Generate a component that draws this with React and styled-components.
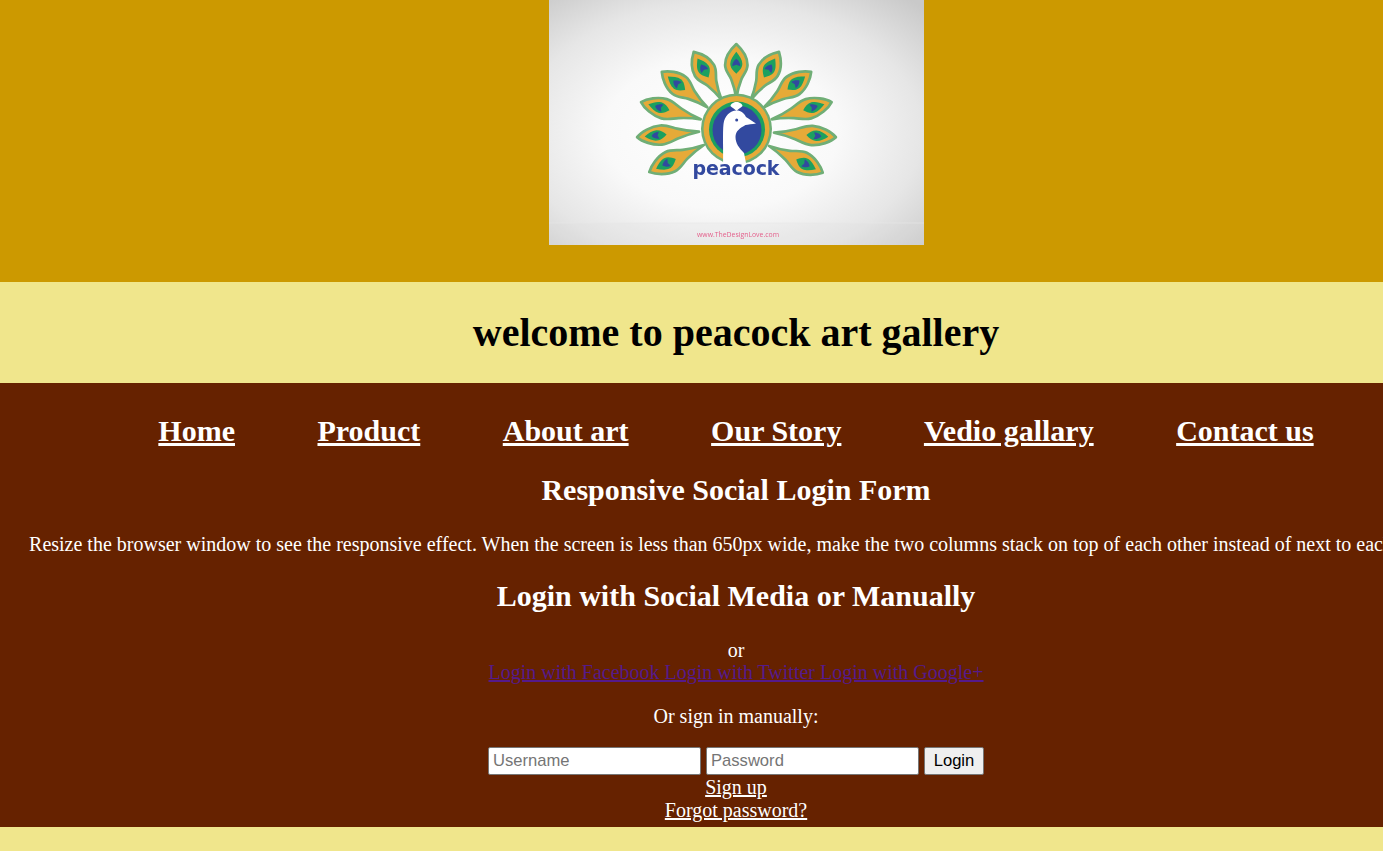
import React from "react";
import styled, { createGlobalStyle } from "styled-components";

const Global = createGlobalStyle`
  html, body { margin: 0; padding: 0; height: 100%; overflow: hidden; background: #f0e68c; }
  body { font-family: "Liberation Serif", "Times New Roman", serif; font-size: 20px; color: #fff; }
`;
const Page = styled.div`
  width: 1472px;
  min-height: 851px;
  text-align: center;
`;
const Masthead = styled.header`
  height: 282px;
  background: #cc9900;
  display: flex;
  justify-content: center;
  align-items: flex-start;
`;
const Logo = styled.svg`
  display: block;
  width: 375px;
  height: 245px;
`;
const TitleBand = styled.div`
  height: 101px;
  background: #f0e68c;
  display: flex;
  align-items: center;
  justify-content: center;
`;
const Title = styled.h1`
  margin: 0;
  font-size: 40px;
  font-weight: bold;
  color: #000;
`;
const Main = styled.main`
  height: 444px;
  background: #662200;
  padding-top: 30px;
  box-sizing: border-box;
`;
const Nav = styled.nav`
  display: flex;
  justify-content: center;
  gap: 82.5px;
  line-height: 35px;
`;
const NavLink = styled.a`
  font-size: 30px;
  font-weight: bold;
  color: #fff;
  text-decoration: underline;
`;
const Heading = styled.h2`
  margin: ${(p) => p.$top}px 0 0;
  font-size: 30px;
  line-height: 34px;
  font-weight: bold;
`;
const Lead = styled.p`
  margin: 26px 0 0;
  line-height: 23px;
  white-space: nowrap;
  display: flex;
  justify-content: center;
`;
const Line = styled.div`
  line-height: ${(p) => p.$height || 23}px;
  margin-top: ${(p) => p.$top || 0}px;
`;
const SocialLink = styled.a`
  color: #551a8b;
  text-decoration: underline;
`;
const FormRow = styled.form`
  display: flex;
  justify-content: center;
  gap: 5px;
  margin-top: 19px;
`;
const Field = styled.input`
  box-sizing: border-box;
  width: 213px;
  height: 28px;
  padding: 1px 4px;
  border: 1px solid #767676;
  border-radius: 2px;
  background: #fff;
  font: 16.6px "Liberation Sans", Arial, sans-serif;
  &::placeholder { color: #757575; opacity: 1; }
`;
const Submit = styled.button`
  box-sizing: border-box;
  width: 60px;
  height: 28px;
  padding: 0;
  border: 1px solid #767676;
  border-radius: 2px;
  background: #efefef;
  color: #000;
  font: 16.6px "Liberation Sans", Arial, sans-serif;
`;
const PlainLink = styled.a`
  color: #fff;
  text-decoration: underline;
`;

/* [baseX, baseY, tipX, tipY, halfWidth] in the logo's own pixels */
const feathers = [
  [187.3, 98.3, 187.3, 42.7, 11.2],
  [172.7, 100, 144, 50.7, 11],
  [201.7, 100, 230.7, 50.7, 11],
  [158.3, 107.3, 111.7, 71, 10.8],
  [215, 107.3, 263.3, 71, 10.8],
  [151.7, 119.3, 90.7, 101.7, 10],
  [222.7, 119.3, 284, 101.7, 10],
  [150, 131.7, 86.7, 137.3, 9.6],
  [225, 132.7, 288.3, 137.3, 9.6],
  [155, 145, 99, 172.7, 10.8],
  [220, 146, 275, 173.3, 10.8],
];

const Feather = ({ data }) => {
  const [bx, by, tx, ty, w] = data;
  const dx = tx - bx;
  const dy = ty - by;
  const L = Math.hypot(dx, dy);
  const a = (Math.atan2(dx, -dy) * 180) / Math.PI;
  const wY = -L * 0.6;
  const g = w * 0.54;
  const b = w * 0.36;
  return (
    <g transform={`translate(${bx} ${by}) rotate(${a})`}>
      <path
        d={`M0 0 C0.800 ${-L * 0.1} 2 ${-L * 0.2} 5 ${-L * 0.34} C7 ${-L * 0.43} ${w} ${wY + 6} ${w} ${wY} C${w} ${wY - 9} 5 ${-L + 6} 0 ${-L + 1.400} C-5 ${-L + 6} ${-w} ${wY - 9} ${-w} ${wY} C${-w} ${wY + 6} -7 ${-L * 0.43} -5 ${-L * 0.34} C-2 ${-L * 0.2} -0.800 ${-L * 0.1} 0 0 Z`}
        fill="#e6aa38"
        stroke="#6fae76"
        strokeWidth="2.7"
        strokeLinejoin="round"
      />
      <path
        d={`M0 ${-L + 9} C3 ${-L + 13} ${g} ${-L + 17} ${g} ${-L + 21} C${g} ${-L + 25} 3 ${-L + 28} 0 ${-L + 31} C-3 ${-L + 28} ${-g} ${-L + 25} ${-g} ${-L + 21} C${-g} ${-L + 17} -3 ${-L + 13} 0 ${-L + 9} Z`}
        fill="#1ba061"
      />
      <path
        d={`M0 ${-L + 16} C2 ${-L + 17.500} ${b} ${-L + 20} ${b} ${-L + 23.500} L0 ${-L + 22} L${-b} ${-L + 23.500} C${-b} ${-L + 20} -2 ${-L + 17.500} 0 ${-L + 16} Z`}
        fill="#33489f"
      />
    </g>
  );
};

const LogoArt = () => (
  <Logo viewBox="0 0 375 245" role="img" aria-label="Peacock logo">
    <defs>
      <radialGradient id="bg" cx="46%" cy="54%" r="74%">
        <stop offset="0" stopColor="#ffffff" />
        <stop offset="0.42" stopColor="#f9f9f9" />
        <stop offset="0.72" stopColor="#e6e6e6" />
        <stop offset="1" stopColor="#c9c9c9" />
      </radialGradient>
      <filter id="soft" x="-5%" y="-5%" width="110%" height="110%">
        <feGaussianBlur stdDeviation="0.65" />
      </filter>
    </defs>
    <rect width="375" height="245" fill="url(#bg)" />
    <rect y="223" width="375" height="22" fill="#d9d9d9" opacity="0.15" />
    <rect y="222.500" width="375" height="1" fill="#e9e9e9" opacity="0.6" />
    <g filter="url(#soft)">
      {feathers.map((f) => <Feather key={f.join()} data={f} />)}
      <circle cx="187.5" cy="129" r="35.5" fill="#6fae76" />
      <circle cx="187.5" cy="129" r="33" fill="#e6aa38" />
      <circle cx="188" cy="129.500" r="28" fill="#1ba061" />
      <circle cx="188" cy="130" r="24.5" fill="#33489f" />
      <path
        d="M174 168 C174.500 150 173.500 132 174.500 124 C175.500 116 181 110.500 187.500 110.500 C192 110.500 195 113 197 117 C200 119 204 121.500 207 123.500 C203 124.300 199 124.500 196.500 125 C191 128 186.500 131 186.500 137 C186.500 143 190 148 195 153 L198 168 Z"
        fill="#fff"
      />
      <path d="M187.500 102 C190 102 193.500 104 193.500 106 C192 108 189.500 108.500 187.500 111 C185.500 108.500 183 108 181.500 106 C181.500 104 185 102 187.500 102 Z" fill="#fff" />
      <circle cx="187.7" cy="120" r="1.5" fill="#33489f" />
      <text
        x="187"
        y="175"
        textAnchor="middle"
        fontFamily="'DejaVu Sans', sans-serif"
        fontWeight="bold"
        fontSize="19"
        textLength="87"
        lengthAdjust="spacing"
        fill="#33489f"
      >
        peacock
      </text>
      <text
        x="189"
        y="237"
        textAnchor="middle"
        fontFamily="'Open Sans', sans-serif"
        fontSize="7.300"
        textLength="82"
        lengthAdjust="spacingAndGlyphs"
        fill="#e4608c"
      >
        www.TheDesignLove.com
      </text>
    </g>
  </Logo>
);

export default function App() {
  return (
    <Page>
      <Global />
      <Masthead>
        <LogoArt />
      </Masthead>
      <TitleBand>
        <Title>welcome to peacock art gallery</Title>
      </TitleBand>
      <Main>
        <Nav>
          {["Home", "Product", "About art", "Our Story", "Vedio gallary", "Contact us"].map((t) => (
            <NavLink href="#" key={t}>{t}</NavLink>
          ))}
        </Nav>
        <Heading $top={25}>Responsive Social Login Form</Heading>
        <Lead>
          Resize the browser window to see the responsive effect. When the screen is less than 650px wide, make the two columns stack on top of each other instead of next to each other.
        </Lead>
        <Heading $top={23}>Login with Social Media or Manually</Heading>
        <Line $top={26} $height={22}>or</Line>
        <Line>
          <SocialLink href="#">Login with Facebook Login with Twitter Login with Google+</SocialLink>
        </Line>
        <Line $top={21}>Or sign in manually:</Line>
        <FormRow onSubmit={(e) => e.preventDefault()}>
          <Field placeholder="Username" />
          <Field placeholder="Password" type="password" />
          <Submit type="submit">Login</Submit>
        </FormRow>
        <Line $top={1}><PlainLink href="#">Sign up</PlainLink></Line>
        <Line><PlainLink href="#">Forgot password?</PlainLink></Line>
      </Main>
    </Page>
  );
}
